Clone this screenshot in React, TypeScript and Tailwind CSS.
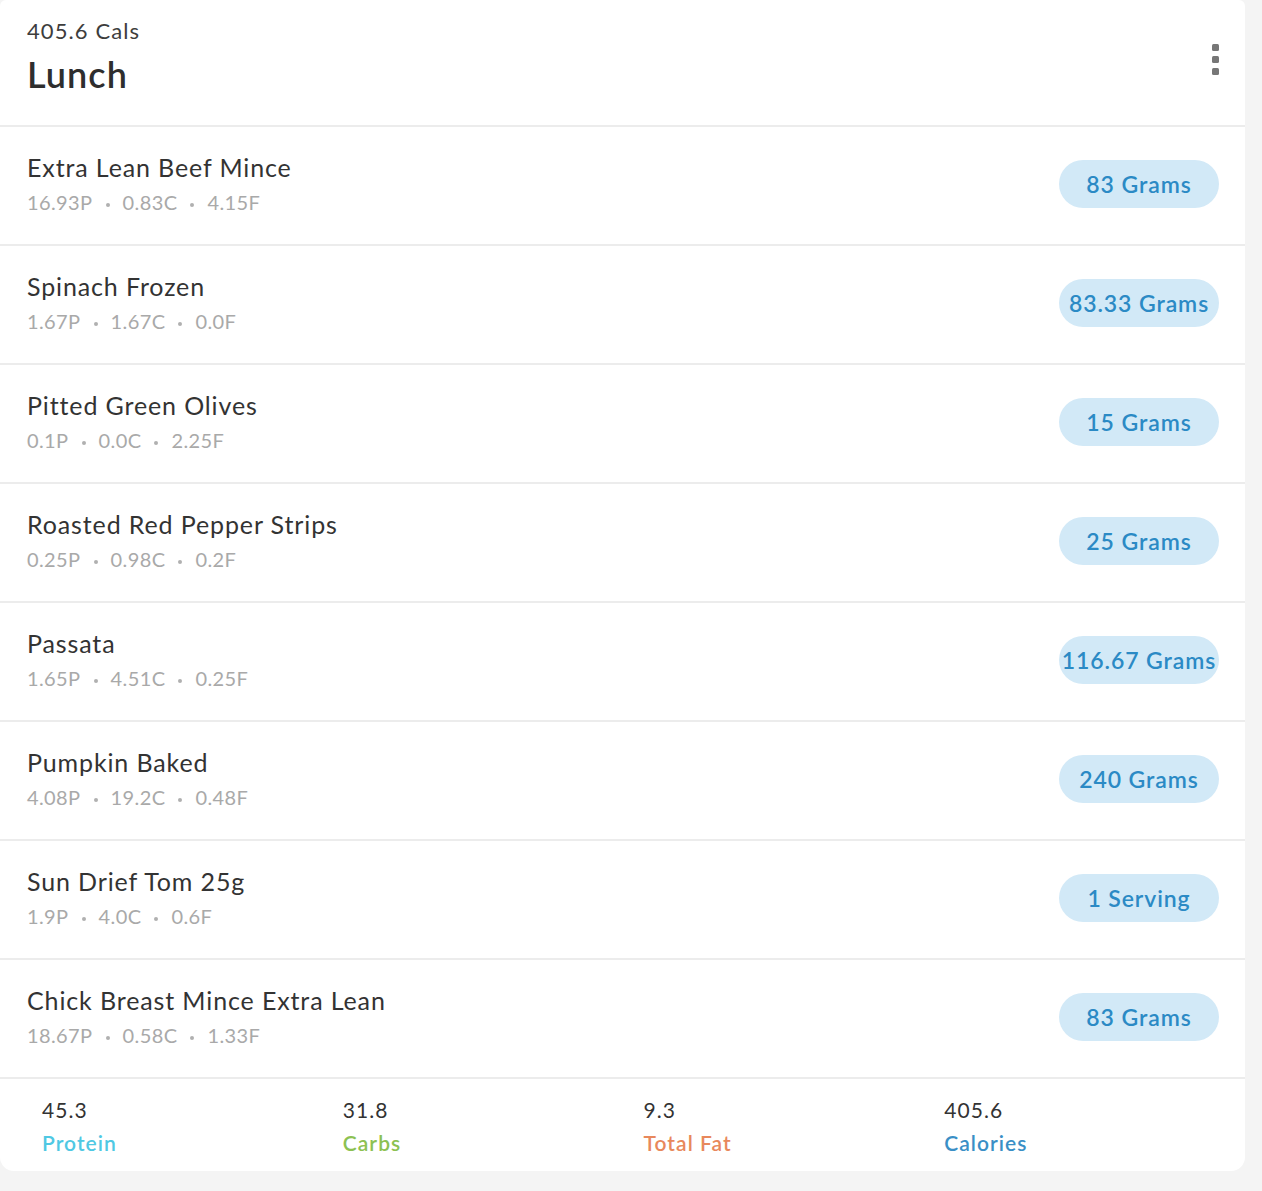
import React from "react";

const foods = [
  { name: "Extra Lean Beef Mince", p: "16.93P", c: "0.83C", f: "4.15F", q: "83 Grams" },
  { name: "Spinach Frozen", p: "1.67P", c: "1.67C", f: "0.0F", q: "83.33 Grams" },
  { name: "Pitted Green Olives", p: "0.1P", c: "0.0C", f: "2.25F", q: "15 Grams" },
  { name: "Roasted Red Pepper Strips", p: "0.25P", c: "0.98C", f: "0.2F", q: "25 Grams" },
  { name: "Passata", p: "1.65P", c: "4.51C", f: "0.25F", q: "116.67 Grams" },
  { name: "Pumpkin Baked", p: "4.08P", c: "19.2C", f: "0.48F", q: "240 Grams" },
  { name: "Sun Drief Tom 25g", p: "1.9P", c: "4.0C", f: "0.6F", q: "1 Serving" },
  { name: "Chick Breast Mince Extra Lean", p: "18.67P", c: "0.58C", f: "1.33F", q: "83 Grams" },
];

const totals = [
  { v: "45.3", l: "Protein", c: "text-[#4fc8e3]" },
  { v: "31.8", l: "Carbs", c: "text-[#8cc152]" },
  { v: "9.3", l: "Total Fat", c: "text-[#e8885c]" },
  { v: "405.6", l: "Calories", c: "text-[#3a8fc6]" },
];

function Dot() {
  return <span className="mx-[13px] inline-block h-[4px] w-[4px] rounded-full bg-[#b0b0b0] align-middle" />;
}

export default function App() {
  return (
    <div className="min-h-[1191px] w-[1262px] bg-[#f4f4f4]" style={{ fontFamily: "Lato, 'Noto Sans', sans-serif" }}>
      <div className="w-[1245px] rounded-b-[14px] rounded-t-[6px] bg-white">
        <div className="flex h-[127px] items-start justify-between border-b-2 border-[#ececec] pl-[27px] pr-[26px]">
          <div className="pt-[17px]">
            <div className="text-[22px] leading-[28px] tracking-[0.05em] text-[#3d3d3d]">405.6 Cals</div>
            <div className="mt-[9px] text-[36px] font-semibold leading-[40px] tracking-[0.03em] text-[#2e2e2e]">Lunch</div>
          </div>
          <div className="mt-[44px] flex flex-col gap-[5px]">
            <span className="h-[7px] w-[7px] rounded-[1.5px] bg-[#777]" />
            <span className="h-[7px] w-[7px] rounded-[1.5px] bg-[#777]" />
            <span className="h-[7px] w-[7px] rounded-[1.5px] bg-[#777]" />
          </div>
        </div>
        {foods.map((fd, i) => (
          <div key={i} className="flex h-[119px] items-start justify-between border-b-2 border-[#ececec] pl-[27px] pr-[26px] pt-[24px]">
            <div>
              <div className="text-[25px] leading-[32px] tracking-[0.035em] text-[#333]">{fd.name}</div>
              <div className="mt-[6px] text-[20px] leading-[26px] tracking-[0.02em] text-[#a9a9a9]">
                {fd.p}
                <Dot />
                {fd.c}
                <Dot />
                {fd.f}
              </div>
            </div>
            <div className="mt-[9px] flex h-[48px] min-w-[160px] items-center justify-center whitespace-nowrap rounded-full bg-[#d2e9f7] px-[2px] text-[23px] font-semibold tracking-[0.04em] text-[#2b8ac5]">
              {fd.q}
            </div>
          </div>
        ))}
        <div className="grid h-[92px] grid-cols-4 pl-[42px] pt-[17px]">
          {totals.map((t) => (
            <div key={t.l} className="w-[301px]">
              <div className="text-[21px] leading-[28px] tracking-[0.05em] text-[#333]">{t.v}</div>
              <div className={`mt-[6px] text-[21px] font-semibold leading-[26px] tracking-[0.05em] ${t.c}`}>{t.l}</div>
            </div>
          ))}
        </div>
      </div>
    </div>
  );
}
